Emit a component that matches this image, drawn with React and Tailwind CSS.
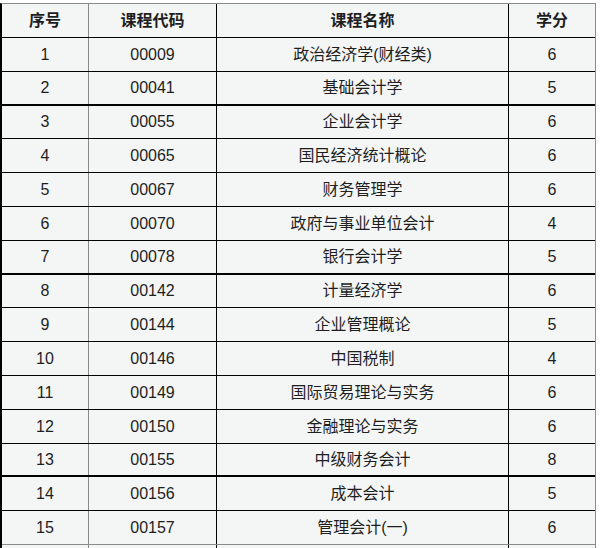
import React from "react";

// course list; h = row height incl. bottom border, thick = heavy separator below
const rows = [
  { no: "1", code: "00009", name: "政治经济学(财经类)", credit: "6", h: "h-[34px]" },
  { no: "2", code: "00041", name: "基础会计学", credit: "5", h: "h-[34px]", thick: true },
  { no: "3", code: "00055", name: "企业会计学", credit: "6", h: "h-[33px]" },
  { no: "4", code: "00065", name: "国民经济统计概论", credit: "6", h: "h-[34px]" },
  { no: "5", code: "00067", name: "财务管理学", credit: "6", h: "h-[34px]" },
  { no: "6", code: "00070", name: "政府与事业单位会计", credit: "4", h: "h-[34px]" },
  { no: "7", code: "00078", name: "银行会计学", credit: "5", h: "h-[34px]", thick: true },
  { no: "8", code: "00142", name: "计量经济学", credit: "6", h: "h-[33px]" },
  { no: "9", code: "00144", name: "企业管理概论", credit: "5", h: "h-[34px]" },
  { no: "10", code: "00146", name: "中国税制", credit: "4", h: "h-[34px]" },
  { no: "11", code: "00149", name: "国际贸易理论与实务", credit: "6", h: "h-[34px]" },
  { no: "12", code: "00150", name: "金融理论与实务", credit: "6", h: "h-[34px]" },
  { no: "13", code: "00155", name: "中级财务会计", credit: "8", h: "h-[33px]", thick: true },
  { no: "14", code: "00156", name: "成本会计", credit: "5", h: "h-[34px]" },
  { no: "15", code: "00157", name: "管理会计(一)", credit: "6", h: "h-[34px]", last: true },
  // next row is only a sliver at the bottom edge, so keep it empty
  { no: "", code: "", name: "", credit: "", h: "h-[34px]" },
];

const Row = ({ cells, className }) => (
  <div className={`grid grid-cols-[87px_128px_292px_86px] ${className}`}>
    <div className="flex items-center justify-center border-r border-r-[#8a8a8a]">
      {cells[0]}
    </div>
    <div className="flex items-center justify-center border-r border-r-black">
      {cells[1]}
    </div>
    <div className="flex items-center justify-center border-r border-r-black">
      {cells[2]}
    </div>
    <div className="flex items-center justify-center">{cells[3]}</div>
  </div>
);

const App = () => {
  return (
    <div className="w-[600px] h-[548px] overflow-hidden bg-white pt-[3px]">
      <div className="w-[596px] border-l-2 border-l-black border-t border-t-[#8a8a8a] border-r border-r-[#8a8a8a] bg-[#f4f6f6] text-[16px] text-[#1e1e1e] font-['Liberation_Sans','Noto_Sans_CJK_SC',sans-serif]">
        <Row
          cells={["序号", "课程代码", "课程名称", "学分"]}
          className="h-[34px] border-b border-b-black font-bold"
        />
        {rows.map((r, i) => (
          <Row
            key={i}
            cells={[r.no, r.code, r.name, r.credit]}
            className={`${r.h} ${
              r.thick
                ? "border-b-2 border-b-black"
                : r.last
                ? "border-b border-b-[#8a8a8a]"
                : "border-b border-b-black"
            }`}
          />
        ))}
      </div>
    </div>
  );
};

export default App;
